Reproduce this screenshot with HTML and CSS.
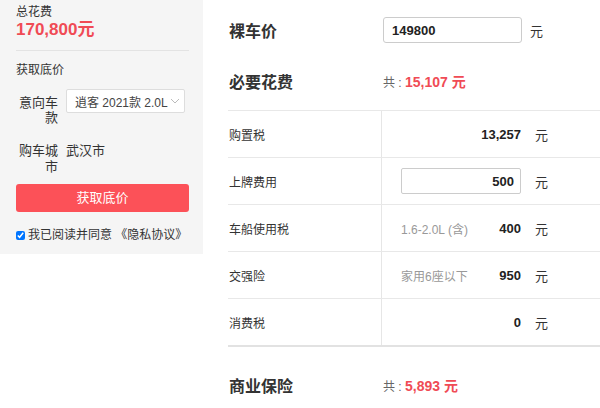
FILE: index.html
```html
<!DOCTYPE html>
<html lang="zh-CN">
<head>
    <meta charset="UTF-8">
    <title>购车计算器</title>

    <link rel="stylesheet" href="styles.css">

</head>
<body>

<div class="page">

    <aside class="side">
        <div class="side_title">总花费</div>
        <div class="side_total">170,800元</div>
        <div class="side_line"></div>
        <div class="side_sub">获取底价</div>

        <div class="side_row side_row-select">
            <div class="side_label">意向车款</div>
            <div class="side_select">
                <span>逍客 2021款 2.0L</span>
                <svg width="10" height="6" viewBox="0 0 10 6"><path d="M1 1l4 4 4-4" fill="none" stroke="#bbb" stroke-width="1"/></svg>
            </div>
        </div>

        <div class="side_row side_row-city">
            <div class="side_label">购车城市</div>
            <div class="side_value">武汉市</div>
        </div>

        <div class="side_btn">获取底价</div>

        <label class="side_agree">
            <input type="checkbox" checked>
            <span>我已阅读并同意 《隐私协议》</span>
        </label>
    </aside>

    <main class="calc">

        <div class="calc_head calc_head-price">
            <div class="calc_name">裸车价</div>
            <input class="calc_price" type="text" value="149800">
            <span class="calc_unit-top">元</span>
        </div>

        <div class="calc_head calc_head-sum">
            <div class="calc_name">必要花费</div>
            <div class="calc_sum">共 : <b>15,107 元</b></div>
        </div>

        <div class="calc_table">
            <div class="calc_row">
                <div class="calc_label">购置税</div>
                <div class="calc_cell">
                    <div class="calc_box"><span class="calc_desc"></span><b>13,257</b></div>
                    <span class="calc_unit">元</span>
                </div>
            </div>
            <div class="calc_row">
                <div class="calc_label">上牌费用</div>
                <div class="calc_cell">
                    <input class="calc_input" type="text" value="500">
                    <span class="calc_unit">元</span>
                </div>
            </div>
            <div class="calc_row">
                <div class="calc_label">车船使用税</div>
                <div class="calc_cell">
                    <div class="calc_box"><span class="calc_desc">1.6-2.0L (含)</span><b>400</b></div>
                    <span class="calc_unit">元</span>
                </div>
            </div>
            <div class="calc_row">
                <div class="calc_label">交强险</div>
                <div class="calc_cell">
                    <div class="calc_box"><span class="calc_desc">家用6座以下</span><b>950</b></div>
                    <span class="calc_unit">元</span>
                </div>
            </div>
            <div class="calc_row">
                <div class="calc_label">消费税</div>
                <div class="calc_cell">
                    <div class="calc_box"><span class="calc_desc"></span><b>0</b></div>
                    <span class="calc_unit">元</span>
                </div>
            </div>
        </div>

        <div class="calc_head calc_head-ins">
            <div class="calc_name">商业保险</div>
            <div class="calc_sum">共 : <b>5,893 元</b></div>
        </div>

    </main>

</div>

</body>
</html>
```

FILE: styles.css
```css
body {
    margin: 0;
    font-family: "Liberation Sans", "Noto Sans CJK SC", sans-serif;
    color: #333;
    background: #fff;
}

.page {
    display: flex;
    align-items: flex-start;
}

/* 左侧 */

.side {
    width: 203px;
    box-sizing: border-box;
    padding: 4px 14px 11px 16px;
    background: #f5f5f5;
    font-size: 12px;
}

.side_title {
    line-height: 16px;
}

.side_total {
    line-height: 20px;
    font-size: 17px;
    font-weight: bold;
    color: #f04b55;
}

.side_line {
    margin-top: 10px;
    height: 1px;
    background: #e3e3e3;
}

.side_sub {
    margin-top: 11px;
    line-height: 16px;
}

.side_row {
    display: flex;
    align-items: flex-start;
}

.side_row-select {
    margin-top: 11px;
}

.side_row-city {
    margin-top: 18px;
}

.side_label {
    width: 42px;
    margin-right: 8px;
    font-size: 13px;
    line-height: 15px;
    text-align: right;
}

.side_row-select .side_label {
    padding-top: 6px;
}

.side_row-city .side_label,
.side_value {
    line-height: 16px;
}

.side_value {
    font-size: 13px;
}

.side_select {
    width: 119px;
    height: 24px;
    box-sizing: border-box;
    padding: 0 4px 0 8px;
    display: flex;
    align-items: center;
    justify-content: space-between;
    background: #fff;
    border: 1px solid #ddd;
    border-radius: 2px;
    font-size: 12px;
    color: #444;
}

.side_btn {
    margin-top: 9px;
    height: 28px;
    line-height: 28px;
    background: #fc5158;
    border-radius: 3px;
    color: #fff;
    font-size: 13px;
    text-align: center;
}

.side_agree {
    margin-top: 15px;
    display: flex;
    align-items: center;
    line-height: 16px;
}

.side_agree input {
    width: 9px;
    height: 9px;
    margin: 0 3px 0 0;
}

/* 右侧 */

.calc {
    flex: 1;
    padding-left: 25px;
    min-width: 0;
}

.calc_head {
    display: flex;
    align-items: center;
}

.calc_head-price {
    height: 60px;
}

.calc_head-sum {
    height: 42px;
}

.calc_head-ins {
    margin-top: 18px;
    height: 40px;
}

.calc_name {
    width: 155px;
    padding-left: 1px;
    box-sizing: border-box;
    font-size: 16px;
    font-weight: bold;
    color: #333;
}

.calc_price {
    width: 139px;
    height: 26px;
    box-sizing: border-box;
    margin: 0;
    padding: 0 8px;
    border: 1px solid #ccc;
    border-radius: 3px;
    font-family: inherit;
    font-size: 13px;
    font-weight: bold;
    color: #222;
    outline: none;
}

.calc_unit-top {
    margin-left: 8px;
    font-size: 13px;
}

.calc_sum {
    font-size: 12px;
    color: #666;
}

.calc_sum b {
    font-size: 14px;
    color: #f04b55;
}

.calc_table {
    margin-top: 8px;
    border-bottom: 2px solid #e2e2e2;
}

.calc_row {
    display: flex;
    height: 47px;
    box-sizing: border-box;
    border-top: 1px solid #e8e8e8;
}

.calc_label {
    width: 154px;
    padding-left: 1px;
    box-sizing: border-box;
    border-right: 1px solid #e6e6e6;
    display: flex;
    align-items: center;
    font-size: 12px;
    color: #333;
}

.calc_cell {
    flex: 1;
    padding-left: 19px;
    display: flex;
    align-items: center;
}

.calc_box {
    width: 120px;
    display: flex;
    justify-content: space-between;
    align-items: center;
}

.calc_box b {
    font-size: 13px;
    color: #222;
}

.calc_desc {
    font-size: 12px;
    color: #999;
}

.calc_input {
    width: 120px;
    height: 26px;
    box-sizing: border-box;
    margin: 0;
    padding: 0 6px;
    border: 1px solid #ccc;
    border-radius: 2px;
    text-align: right;
    font-family: inherit;
    font-size: 13px;
    font-weight: bold;
    color: #222;
    outline: none;
}

.calc_unit {
    margin-left: 14px;
    font-size: 13px;
}
```
